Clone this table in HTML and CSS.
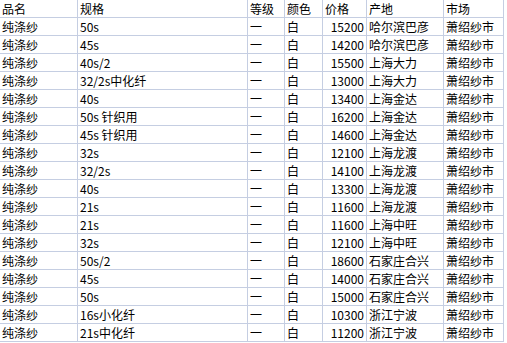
FILE: index.html
```
<!DOCTYPE html>
<html lang="zh">
<head>
<meta charset="utf-8">
<title>纯涤纱价格</title>
<link rel="stylesheet" href="styles.css">
</head>
<body>
<div class="grid">
  <div class="c">品名</div><div class="c">规格</div><div class="c">等级</div><div class="c">颜色</div><div class="c">价格</div><div class="c">产地</div><div class="c">市场</div>

  <div class="c">纯涤纱</div><div class="c">50s</div><div class="c">一</div><div class="c">白</div><div class="c num">15200</div><div class="c">哈尔滨巴彦</div><div class="c">萧绍纱市</div>
  <div class="c">纯涤纱</div><div class="c">45s</div><div class="c">一</div><div class="c">白</div><div class="c num">14200</div><div class="c">哈尔滨巴彦</div><div class="c">萧绍纱市</div>
  <div class="c">纯涤纱</div><div class="c">40s/2</div><div class="c">一</div><div class="c">白</div><div class="c num">15500</div><div class="c">上海大力</div><div class="c">萧绍纱市</div>
  <div class="c">纯涤纱</div><div class="c">32/2s中化纤</div><div class="c">一</div><div class="c">白</div><div class="c num">13000</div><div class="c">上海大力</div><div class="c">萧绍纱市</div>
  <div class="c">纯涤纱</div><div class="c">40s</div><div class="c">一</div><div class="c">白</div><div class="c num">13400</div><div class="c">上海金达</div><div class="c">萧绍纱市</div>
  <div class="c">纯涤纱</div><div class="c">50s 针织用</div><div class="c">一</div><div class="c">白</div><div class="c num">16200</div><div class="c">上海金达</div><div class="c">萧绍纱市</div>
  <div class="c">纯涤纱</div><div class="c">45s 针织用</div><div class="c">一</div><div class="c">白</div><div class="c num">14600</div><div class="c">上海金达</div><div class="c">萧绍纱市</div>
  <div class="c">纯涤纱</div><div class="c">32s</div><div class="c">一</div><div class="c">白</div><div class="c num">12100</div><div class="c">上海龙渡</div><div class="c">萧绍纱市</div>
  <div class="c">纯涤纱</div><div class="c">32/2s</div><div class="c">一</div><div class="c">白</div><div class="c num">14100</div><div class="c">上海龙渡</div><div class="c">萧绍纱市</div>
  <div class="c">纯涤纱</div><div class="c">40s</div><div class="c">一</div><div class="c">白</div><div class="c num">13300</div><div class="c">上海龙渡</div><div class="c">萧绍纱市</div>
  <div class="c">纯涤纱</div><div class="c">21s</div><div class="c">一</div><div class="c">白</div><div class="c num">11600</div><div class="c">上海龙渡</div><div class="c">萧绍纱市</div>
  <div class="c">纯涤纱</div><div class="c">21s</div><div class="c">一</div><div class="c">白</div><div class="c num">11600</div><div class="c">上海中旺</div><div class="c">萧绍纱市</div>
  <div class="c">纯涤纱</div><div class="c">32s</div><div class="c">一</div><div class="c">白</div><div class="c num">12100</div><div class="c">上海中旺</div><div class="c">萧绍纱市</div>
  <div class="c">纯涤纱</div><div class="c">50s/2</div><div class="c">一</div><div class="c">白</div><div class="c num">18600</div><div class="c">石家庄合兴</div><div class="c">萧绍纱市</div>
  <div class="c">纯涤纱</div><div class="c">45s</div><div class="c">一</div><div class="c">白</div><div class="c num">14000</div><div class="c">石家庄合兴</div><div class="c">萧绍纱市</div>
  <div class="c">纯涤纱</div><div class="c">50s</div><div class="c">一</div><div class="c">白</div><div class="c num">15000</div><div class="c">石家庄合兴</div><div class="c">萧绍纱市</div>
  <div class="c">纯涤纱</div><div class="c">16s小化纤</div><div class="c">一</div><div class="c">白</div><div class="c num">10300</div><div class="c">浙江宁波</div><div class="c">萧绍纱市</div>
  <div class="c">纯涤纱</div><div class="c">21s中化纤</div><div class="c">一</div><div class="c">白</div><div class="c num">11200</div><div class="c">浙江宁波</div><div class="c">萧绍纱市</div>
</div>
</body>
</html>
```
FILE: styles.css
```
html, body { margin: 0; padding: 0; background: #fff; }
.grid {
  display: grid;
  grid-template-columns: 77px 169px 36px 37px 43px 76px 59px;
  grid-auto-rows: 17px;
  gap: 1px;
  width: max-content;
  padding: 0 1px 1px 0;
  background: #c5cee2;
  font-family: "Noto Sans CJK SC", "DejaVu Sans", sans-serif;
  font-size: 12px;
  color: #000;
}
.c {
  background: #fff;
  line-height: 17px;
  padding: 0 0 0 2px;
  white-space: nowrap;
  overflow: hidden;
}
.num { text-align: right; padding: 0 2px 0 0; }
```
